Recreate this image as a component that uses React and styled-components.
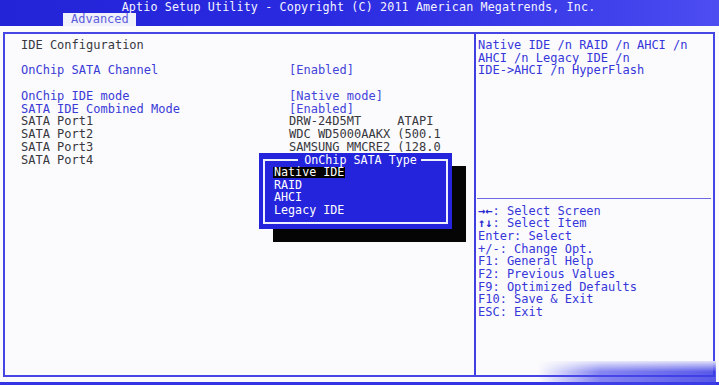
import React from "react";
import styled, { createGlobalStyle } from "styled-components";

const Global = createGlobalStyle`
  html, body { margin: 0; padding: 0; background: #fbfbfd; }
  body { width: 719px; height: 385px; overflow: hidden; }
  * { box-sizing: border-box; }
`;

const Screen = styled.div`
  width: 719px;
  height: 385px;
  display: flex;
  flex-direction: column;
  font-family: "DejaVu Sans Mono", "Liberation Mono", monospace;
  font-size: 12px;
  background: #fbfbfd;
  position: relative;
  overflow: hidden;
`;

const TopBar = styled.header`
  height: 26px;
  background: linear-gradient(90deg, #2323d8 0%, #2a2ae0 45%, #4141ec 85%, #4d4df2 100%);
  display: flex;
  flex-direction: column;
`;

const Title = styled.div`
  height: 12px;
  line-height: 12px;
  margin-top: 1px;
  text-align: center;
  color: #f4f4ff;
  font-size: 11.7px;
  letter-spacing: 0.14px;
  padding-right: 2px;
`;

const TabRow = styled.nav`
  height: 13px;
  display: flex;
  padding-left: 63px;
`;

const Tab = styled.div`
  width: 73px;
  height: 13px;
  line-height: 13px;
  background: #f0f1fb;
  color: #5c5ce0;
  padding-left: 8px;
`;

const Frame = styled.main`
  margin: 6px 4px 0 3px;
  height: 345px;
  border: 2px solid #4646e4;
  display: grid;
  grid-template-columns: 471px 1fr;
  position: relative;
`;

const LeftPanel = styled.section`
  padding: 4.6px 0 0 16px;
  border-right: 2px solid #4040e2;
  line-height: 12.8px;
`;

const Row = styled.div`
  display: grid;
  grid-template-columns: 268px 1fr;
  height: 12.8px;
  white-space: pre;
  color: ${(p) => (p.$blue ? "#3a3ad6" : "#38383e")};
`;

const Value = styled.span`
  color: ${(p) => (p.$blue ? "#4444da" : "#38383e")};
`;

const RightPanel = styled.aside`
  display: flex;
  flex-direction: column;
  color: #3636da;
  line-height: 12.7px;
`;

const Help = styled.div`
  height: 163.5px;
  padding: 4.8px 0 0 2px;
  white-space: pre;
`;

const Divider = styled.hr`
  margin: 0 2px 0 1px;
  border: 0;
  height: 1.5px;
  background: #6a6ae6;
`;

const Keys = styled.div`
  padding: 5.5px 0 0 2px;
  white-space: pre;
`;

const Arrow = styled.span`
  color: #2a2ad0;
  font-weight: bold;
`;

const Popup = styled.div`
  position: absolute;
  left: 254px;
  top: 119px;
  width: 193px;
  height: 76px;
  background: #2424dc;
  padding: 1px 4px 5px 4px;
  box-shadow: 14px 13px 0 #050505;
  color: #ffffff;
  font-size: 11.7px;
`;

const Box = styled.fieldset`
  margin: 0;
  height: 100%;
  border: 2px solid #eef0ff;
  padding: 0 0 0 8px;
  line-height: 12.6px;
`;

const Legend = styled.legend`
  margin: 0 auto;
  padding: 0 5px;
  line-height: 12px;
  transform: translateX(1px);
`;

const Option = styled.div`
  height: 12.6px;
  white-space: nowrap;
`;

const OptionText = styled.span`
  display: inline-block;
  white-space: nowrap;
  line-height: 11px;
  padding: 0 0 0 1px;
  min-width: ${(p) => (p.$active ? "72px" : "0")};
  background: ${(p) => (p.$active ? "#000" : "transparent")};
`;

const BottomBar = styled.footer`
  margin-top: auto;
  height: 3px;
  background: #3434e4;
`;

const Smudge = styled.div`
  position: absolute;
  right: 3px;
  bottom: 0;
  width: 178px;
  height: 24px;
  background:
    linear-gradient(180deg, rgba(251, 251, 253, 0.85) 0%, rgba(251, 251, 253, 0) 45%),
    linear-gradient(90deg, rgba(70, 70, 235, 0) 0%, rgba(70, 70, 235, 0.65) 35%, rgba(60, 60, 230, 0.85) 100%);
  pointer-events: none;
`;

const rows = [
  { label: "IDE Configuration", value: "" },
  { label: "", value: "" },
  { label: "OnChip SATA Channel", value: "[Enabled]", blue: true },
  { label: "", value: "" },
  { label: "OnChip IDE mode", value: "[Native mode]", blue: true },
  { label: "SATA IDE Combined Mode", value: "[Enabled]", blue: true },
  { label: "SATA Port1", value: "DRW-24D5MT     ATAPI" },
  { label: "SATA Port2", value: "WDC WD5000AAKX (500.1" },
  { label: "SATA Port3", value: "SAMSUNG MMCRE2 (128.0" },
  { label: "SATA Port4", value: "" },
];

const options = ["Native IDE", "RAID", "AHCI", "Legacy IDE"];

const keys = [
  ["→←", ": Select Screen"],
  ["↑↓", ": Select Item"],
  ["", "Enter: Select"],
  ["", "+/-: Change Opt."],
  ["", "F1: General Help"],
  ["", "F2: Previous Values"],
  ["", "F9: Optimized Defaults"],
  ["", "F10: Save & Exit"],
  ["", "ESC: Exit"],
];

export default function App() {
  return (
    <Screen>
      <Global />
      <TopBar>
        <Title>Aptio Setup Utility - Copyright (C) 2011 American Megatrends, Inc.</Title>
        <TabRow>
          <Tab>Advanced</Tab>
        </TabRow>
      </TopBar>
      <Frame>
        <LeftPanel>
          {rows.map((r, i) => (
            <Row key={i} $blue={r.blue}>
              <span>{r.label}</span>
              <Value $blue={r.blue}>{r.value}</Value>
            </Row>
          ))}
        </LeftPanel>
        <RightPanel>
          <Help>
            {"Native IDE /n RAID /n AHCI /n\nAHCI /n Legacy IDE /n\nIDE->AHCI /n HyperFlash"}
          </Help>
          <Divider />
          <Keys>
            {keys.map(([a, t], i) => (
              <div key={i}>
                {a && <Arrow>{a}</Arrow>}
                {t}
              </div>
            ))}
          </Keys>
        </RightPanel>
        <Popup>
          <Box>
            <Legend>OnChip SATA Type</Legend>
            {options.map((o, i) => (
              <Option key={o}>
                <OptionText $active={i === 0}>{o}</OptionText>
              </Option>
            ))}
          </Box>
        </Popup>
      </Frame>
      <BottomBar />
      <Smudge />
    </Screen>
  );
}
